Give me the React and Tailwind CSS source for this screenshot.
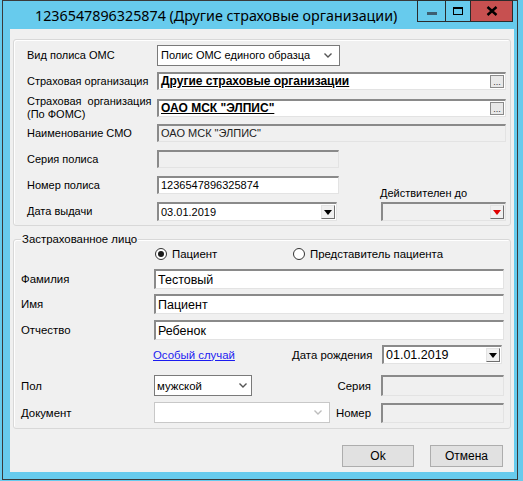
import React from "react";

const sunken =
  "border-t-2 border-l-2 border-b border-r border-t-[#8a8a8a] border-l-[#8a8a8a] border-b-[#e3e3e3] border-r-[#e3e3e3]";

function Chevron({ color = "#555" }) {
  return (
    <svg width="8" height="5" viewBox="0 0 8 5">
      <polyline points="0.5,0.5 4,4 7.5,0.5" fill="none" stroke={color} strokeWidth="1.4" />
    </svg>
  );
}

function DotsBtn() {
  return (
    <div className="mr-[1px] w-[14px] h-[13px] border border-[#8a8a8a] bg-[#e8e8e8] flex items-end justify-center text-[9px] leading-[9px] text-[#333]">
      ...
    </div>
  );
}

function DropBtn({ color = "#000" }) {
  return (
    <div className="mr-[1px] w-[14px] h-[14px] border border-t-[#e3e3e3] border-l-[#e3e3e3] border-b-[#6f6f6f] border-r-[#6f6f6f] bg-[#f0f0f0] flex items-center justify-center">
      <svg width="8" height="5" viewBox="0 0 8 5">
        <polygon points="0,0 8,0 4,5" fill={color} />
      </svg>
    </div>
  );
}

function Radio({ checked }) {
  return (
    <div className="w-[12px] h-[12px] rounded-full border border-[#333] bg-white flex items-center justify-center">
      {checked && <div className="w-[6px] h-[6px] rounded-full bg-[#1a1a1a]" />}
    </div>
  );
}

export default function App() {
  return (
    <div
      className="w-[523px] h-[481px] bg-[#67cbed] overflow-hidden text-black"
      style={{ fontFamily: '"Liberation Sans", Arial, sans-serif' }}
    >
      <div className="ml-[2px] w-[516px] h-[480px] border border-[#3a3a3a] flex flex-col">
        {/* Title bar */}
        <div className="h-[28px] shrink-0 flex items-start justify-between">
          <div className="pl-[32px] pt-[5px] text-[14.3px] leading-[20px] font-['Noto_Sans'] whitespace-nowrap">
            1236547896325874 (Другие страховые организации)
          </div>
          <div className="flex mr-[4px] -mt-[1px]">
            <div className="w-[29px] h-[22px] border border-[#2b2b2b] flex items-end justify-center pb-[6px]">
              <div className="w-[10px] h-[3px] bg-[#3d5f72]" />
            </div>
            <div className="-ml-[1px] w-[26px] h-[22px] border border-[#2b2b2b] flex items-center justify-center">
              <div className="w-[10px] h-[8px] border border-t-2 border-black" />
            </div>
            <div className="-ml-[1px] w-[43px] h-[22px] border border-[#2b2b2b] bg-[#c75050] flex items-center justify-center">
              <svg width="12" height="10" viewBox="0 0 12 10">
                <path d="M1.5 1 L10.5 9 M10.5 1 L1.5 9" stroke="#000" strokeWidth="2.4" />
              </svg>
            </div>
          </div>
        </div>

        {/* Client area */}
        <div className="ml-[7px] w-[504px] h-[443px] shrink-0 bg-[#f0f0f0] flex flex-col text-[11px] leading-[13px]">
          {/* Group 1 */}
          <div className="ml-[3px] mt-[10px] w-[498px] h-[187px] border border-[#d8d8d8] rounded-[3px] shadow-[inset_1px_1px_0_#ffffff] flex flex-col pl-[13px]">
            <div className="mt-[5px] h-[21px] flex items-center">
              <div className="w-[130px]">Вид полиса ОМС</div>
              <div className="w-[183px] h-[21px] border border-[#7a7a7a] bg-white flex items-center justify-between pl-[3px] pr-[7px]">
                <span>Полис ОМС единого образца</span>
                <Chevron />
              </div>
            </div>
            <div className="mt-[6px] h-[18px] flex items-center">
              <div className="w-[130px]">Страховая организация</div>
              <div className={`w-[349px] h-[18px] bg-white flex items-center justify-between pl-[2px] ${sunken}`}>
                <span className="font-bold underline text-[12px]">Другие страховые организации</span>
                <DotsBtn />
              </div>
            </div>
            <div className="mt-[9px] h-[18px] flex items-center">
              <div className="w-[130px] leading-[13px]">
                Страховая&nbsp; организация
                <br />
                (По ФОМС)
              </div>
              <div className={`w-[349px] h-[18px] bg-white flex items-center justify-between pl-[2px] ${sunken}`}>
                <span className="font-bold underline text-[12px]">ОАО МСК "ЭЛПИС"</span>
                <DotsBtn />
              </div>
            </div>
            <div className="mt-[7px] h-[18px] flex items-center">
              <div className="w-[130px]">Наименование СМО</div>
              <div className={`w-[349px] h-[18px] bg-[#f0f0f0] flex items-center pl-[2px] text-[#222] ${sunken}`}>
                ОАО МСК "ЭЛПИС"
              </div>
            </div>
            <div className="mt-[8px] h-[18px] flex items-center">
              <div className="w-[130px]">Серия полиса</div>
              <div className={`w-[182px] h-[18px] bg-[#f0f0f0] ${sunken}`} />
            </div>
            <div className="mt-[8px] flex">
              <div className="flex flex-col">
                <div className="h-[18px] flex items-center">
                  <div className="w-[130px]">Номер полиса</div>
                  <div className={`w-[182px] h-[18px] bg-white flex items-center pl-[2px] ${sunken}`}>
                    1236547896325874
                  </div>
                </div>
                <div className="mt-[8px] h-[19px] flex items-center">
                  <div className="w-[130px]">Дата выдачи</div>
                  <div className={`w-[180px] h-[19px] bg-white flex items-center justify-between pl-[2px] ${sunken}`}>
                    <span>03.01.2019</span>
                    <DropBtn />
                  </div>
                </div>
              </div>
              <div className="ml-[41px] flex flex-col justify-end">
                <div className="leading-[13px]">Действителен до</div>
                <div className={`mt-[2px] ml-[1px] w-[125px] h-[19px] bg-[#f0f0f0] flex items-center justify-end ${sunken}`}>
                  <DropBtn color="#e00000" />
                </div>
              </div>
            </div>
          </div>

          {/* Group 2 */}
          <div className="relative ml-[3px] mt-[13px] w-[498px] h-[190px] border border-[#d8d8d8] rounded-[3px] shadow-[inset_1px_1px_0_#ffffff] flex flex-col pl-[7px] text-[11.4px] leading-[14px]">
            <div className="absolute -top-[8px] left-[7px] px-[1px] bg-[#f0f0f0]">Застрахованное лицо</div>

            <div className="mt-[7px] h-[13px] flex items-center">
              <div className="w-[134px]" />
              <div className="w-[138px] flex items-center">
                <Radio checked />
                <span className="ml-[5px]">Пациент</span>
              </div>
              <div className="flex items-center">
                <Radio />
                <span className="ml-[5px]">Представитель пациента</span>
              </div>
            </div>

            <div className="mt-[9px] h-[20px] flex items-center">
              <div className="w-[133px]">Фамилия</div>
              <div className={`w-[350px] h-[20px] bg-white flex items-center pl-[2px] text-[12.5px] ${sunken}`}>Тестовый</div>
            </div>
            <div className="mt-[5px] h-[20px] flex items-center">
              <div className="w-[133px]">Имя</div>
              <div className={`w-[350px] h-[20px] bg-white flex items-center pl-[2px] text-[12.5px] ${sunken}`}>Пациент</div>
            </div>
            <div className="mt-[6px] h-[20px] flex items-center">
              <div className="w-[133px]">Отчество</div>
              <div className={`w-[350px] h-[20px] bg-white flex items-center pl-[2px] text-[12.5px] ${sunken}`}>Ребенок</div>
            </div>

            <div className="mt-[5px] h-[19px] flex items-center">
              <div className="w-[132px]" />
              <div className="w-[139px] text-[#1b1bf0] underline">Особый случай</div>
              <div className="w-[90px]">Дата рождения</div>
              <div className={`w-[120px] h-[19px] bg-white flex items-center justify-between pl-[2px] text-[12.5px] ${sunken}`}>
                <span>01.01.2019</span>
                <DropBtn />
              </div>
            </div>

            <div className="mt-[11px] h-[21px] flex items-center">
              <div className="w-[133px]">Пол</div>
              <div className="w-[98px] h-[21px] border border-[#7a7a7a] bg-white flex items-center justify-between pl-[2px] pr-[4px]">
                <span>мужской</span>
                <Chevron />
              </div>
              <div className="w-[119px] text-right">Серия</div>
              <div className={`ml-[10px] w-[123px] h-[21px] bg-[#f0f0f0] ${sunken}`} />
            </div>
            <div className="mt-[6px] h-[21px] flex items-center">
              <div className="w-[133px]">Документ</div>
              <div className="w-[176px] h-[21px] border border-[#c8c8c8] bg-white flex items-center justify-end pr-[7px]">
                <Chevron color="#bdbdbd" />
              </div>
              <div className="w-[41px] text-right">Номер</div>
              <div className={`ml-[10px] w-[123px] h-[20px] bg-[#f0f0f0] ${sunken}`} />
            </div>
          </div>

          {/* Buttons */}
          <div className="mt-[16px] flex justify-end pr-[11px] gap-[16px] text-[12px]">
            <div className="w-[72px] h-[22px] border border-[#adadad] bg-[#e1e1e1] flex items-center justify-center">Ok</div>
            <div className="w-[73px] h-[22px] border border-[#adadad] bg-[#e1e1e1] flex items-center justify-center">Отмена</div>
          </div>
        </div>
      </div>
    </div>
  );
}
